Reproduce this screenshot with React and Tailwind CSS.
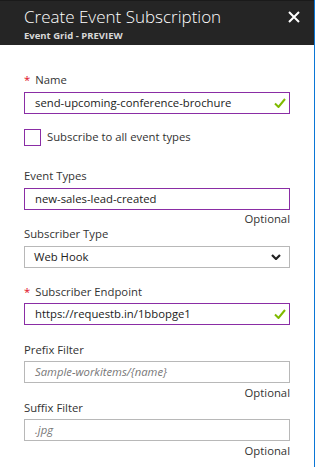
import React from 'react';

const font = { fontFamily: '"Open Sans", "Noto Sans", sans-serif' };

function Check() {
  return (
    <svg width="12" height="10" viewBox="0 0 12 10" className="shrink-0">
      <polyline points="1,5.5 4.5,9 11,1" fill="none" stroke="#7fba00" strokeWidth="2" />
    </svg>
  );
}

function Chevron() {
  return (
    <svg width="10" height="6" viewBox="0 0 10 6" className="shrink-0">
      <polyline points="1,1 5,5 9,1" fill="none" stroke="#222" strokeWidth="2.2" />
    </svg>
  );
}

function Label({ children, required, className = '' }) {
  return (
    <div className={'flex items-center h-4 text-[11.3px] leading-4 text-[#333] ' + className}>
      {required && <span className="text-[#e00b1c] mr-[5px]">*</span>}
      {children}
    </div>
  );
}

function TextBox({ value, placeholder, valid, className = '' }) {
  return (
    <div
      className={
        'w-[266px] h-[22px] flex items-center justify-between pl-[10px] pr-[3px] border text-[11.3px] ' +
        (value ? 'border-[#8a2da5] ' : 'border-[#b8b8b8] ') +
        className
      }
    >
      {value ? (
        <span className="text-[#222]">{value}</span>
      ) : (
        <span className="italic text-[#777]">{placeholder}</span>
      )}
      {valid && <Check />}
    </div>
  );
}

function Optional({ className = '' }) {
  return <div className={'w-[266px] text-right text-[11.3px] leading-[14px] text-[#333] ' + className}>Optional</div>;
}

export default function App() {
  return (
    <div className="w-[315px] h-[467px] bg-white flex flex-col border-r border-[#0a76d6] overflow-hidden" style={font}>
      <div className="h-[45px] bg-[#252525] border-t border-[#1a1a1a] flex justify-between px-6 pt-[4px]">
        <div>
          <div className="text-[17px] leading-[24px] font-light text-white">Create Event Subscription</div>
          <div className="text-[9.5px] leading-[13px] font-bold text-[#d8d8d8]">Event Grid - PREVIEW</div>
        </div>
        <svg width="12" height="12" viewBox="0 0 12 12" className="mt-[6px] -mr-[10px]">
          <path d="M1 1 L11 11 M11 1 L1 11" stroke="#fff" strokeWidth="2" />
        </svg>
      </div>

      <div className="flex flex-col px-6">
        <Label required className="mt-[27px]">Name</Label>
        <TextBox className="mt-[4px]" value="send-upcoming-conference-brochure" valid />

        <div className="mt-[15px] flex items-center h-[17px]">
          <div className="w-[17px] h-[17px] border border-[#8a2da5]" />
          <span className="ml-[6px] text-[11.3px] text-[#333]">Subscribe to all event types</span>
        </div>

        <Label className="mt-[22px]">Event Types</Label>
        <TextBox className="mt-[4px]" value="new-sales-lead-created" />
        <Optional className="mt-[2px]" />

        <Label>Subscriber Type</Label>
        <div className="mt-[4px] w-[266px] h-[22px] flex items-center justify-between pl-[9px] pr-[8px] border border-[#b8b8b8] text-[11.3px] text-[#222]">
          <span>Web Hook</span>
          <Chevron />
        </div>

        <Label required className="mt-[16px]">Subscriber Endpoint</Label>
        <TextBox className="mt-[3px]" value="https://requestb.in/1bbopge1" valid />

        <Label className="mt-[17px]">Prefix Filter</Label>
        <TextBox className="mt-[3px]" placeholder="Sample-workitems/{name}" />
        <Optional className="mt-[3px]" />

        <Label>Suffix Filter</Label>
        <TextBox className="mt-[3px]" placeholder=".jpg" />
        <Optional className="mt-[3px]" />
      </div>
    </div>
  );
}
